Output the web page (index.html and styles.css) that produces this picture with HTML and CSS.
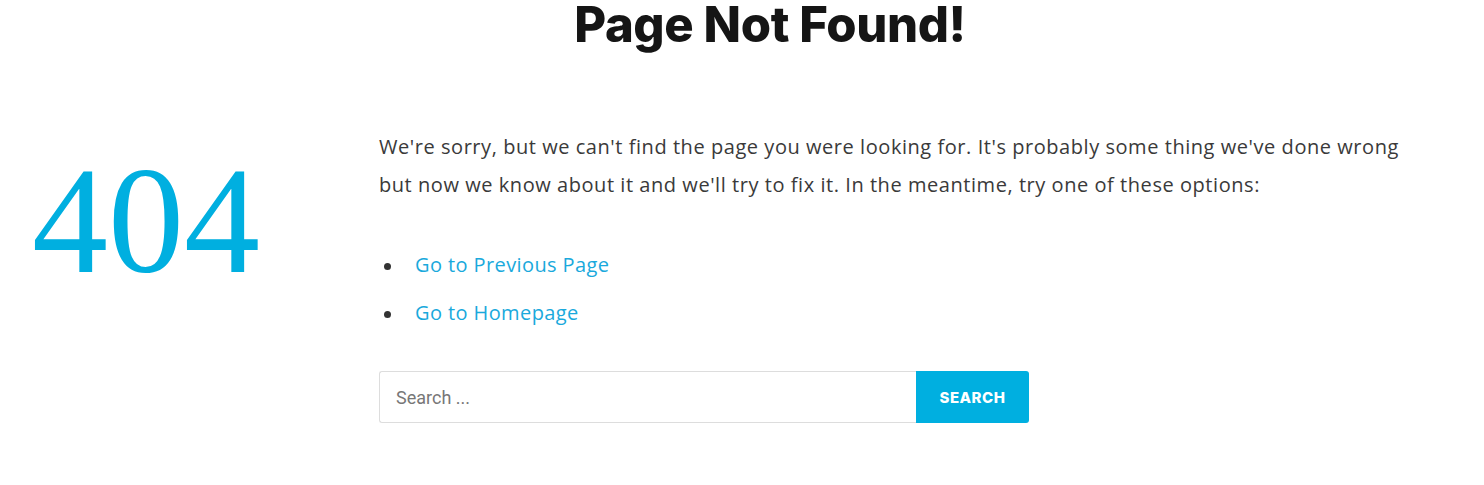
FILE: index.html
```html
<!DOCTYPE html>
<html lang="en">
<head>
    <meta charset="UTF-8">
    <meta name="viewport" content="width=device-width, initial-scale=1.0">
    <title>Page Not Found</title>
    <link rel="stylesheet" href="styles.css">
</head>
<body>
    <div class="page">
        <h1 class="page-title">Page Not Found!</h1>

        <div class="error-row">
            <div class="error-code">404</div>
            <div class="error-content">
                <p class="error-text">We're sorry, but we can't find the page you were looking for. It's probably some thing we've done wrong but now we know about it and we'll try to fix it. In the meantime, try one of these options:</p>
                <ul class="error-links">
                    <li><a href="#">Go to Previous Page</a></li>
                    <li><a href="#">Go to Homepage</a></li>
                </ul>
                <form class="search-form" onsubmit="return false">
                    <input class="search-field" type="search" placeholder="Search ...">
                    <button class="search-submit" type="submit">Search</button>
                </form>
            </div>
        </div>
    </div>
</body>
</html>
```

FILE: styles.css
```css
body {
    margin: 0;
    background: #fff;
    font-family: "Open Sans", "Noto Sans", sans-serif;
    color: #3a3a3a;
}
.page {
    width: 1484px;
}
.page-title {
    margin: 0 0 0 56px;
    padding-top: 1px;
    text-align: center;
    font-family: Inter, "Open Sans", sans-serif;
    font-weight: 800;
    font-size: 49px;
    line-height: 47px;
    letter-spacing: -0.4px;
    color: #151515;
}
.error-row {
    display: grid;
    grid-template-columns: 379px 1fr;
    margin-top: 80px;
}
.error-code {
    padding: 17px 0 0 32px;
    font-family: "Liberation Serif", "DejaVu Serif", serif;
    font-size: 152px;
    line-height: 1;
    color: #00afe0;
}
.error-text {
    margin: 0;
    max-width: 1048px;
    font-size: 20px;
    letter-spacing: 0.55px;
    line-height: 38px;
    color: #3a3a3a;
}
.error-links {
    list-style: none;
    margin: 37px 0 0;
    padding: 0;
    font-size: 20px;
    letter-spacing: 0.4px;
    line-height: 48px;
}
.error-links li {
    display: flex;
    align-items: center;
}
.error-links li::before {
    content: "";
    width: 7px;
    height: 7px;
    margin: 2px 24px 0 5px;
    border-radius: 50%;
    background: #333;
}
.error-links a {
    color: #1aa9dc;
    text-decoration: none;
}
.search-form {
    display: flex;
    width: 650px;
    margin-top: 34px;
}
.search-field {
    flex: 1;
    height: 52px;
    box-sizing: border-box;
    padding: 0 16px;
    border: 1px solid #ddd;
    border-right: none;
    border-radius: 3px 0 0 3px;
    font-family: Roboto, "Open Sans", sans-serif;
    font-size: 18px;
    color: #333;
    outline: none;
}
.search-field::placeholder {
    color: #777;
}
.search-submit {
    width: 113px;
    height: 52px;
    border: none;
    border-radius: 0 3px 3px 0;
    background: #00afe0;
    color: #fff;
    font-family: Inter, "Open Sans", sans-serif;
    font-weight: 800;
    font-size: 15px;
    letter-spacing: 0.5px;
    text-transform: uppercase;
    cursor: pointer;
}
```
